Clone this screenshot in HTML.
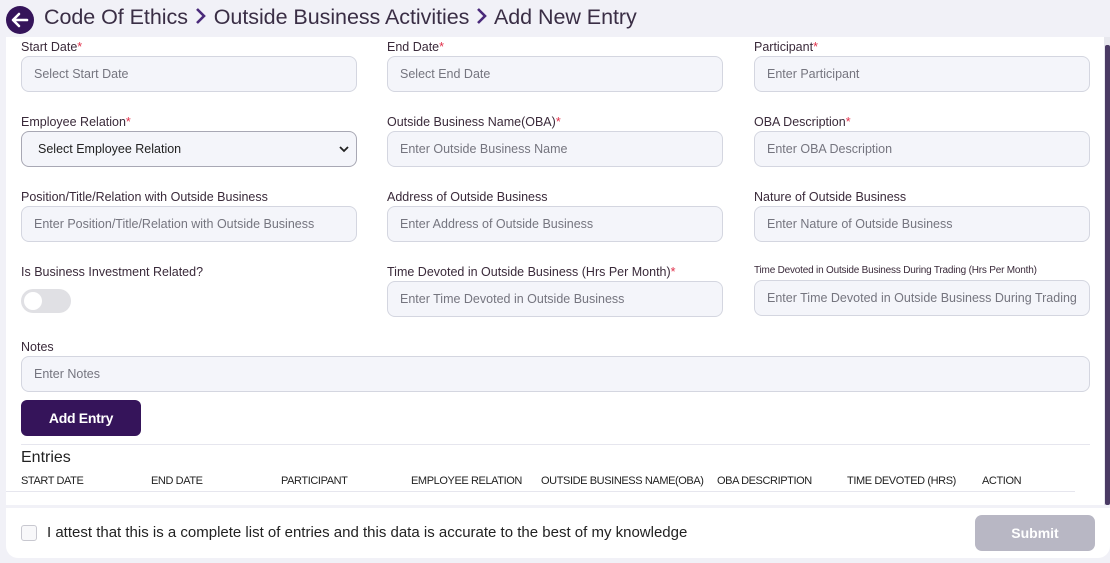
<!DOCTYPE html>
<html><head><style>
*{box-sizing:border-box;margin:0;padding:0}
body{width:1110px;height:563px;background:#f1f1f7;font-family:"Liberation Sans",sans-serif;position:relative;overflow:hidden;color:#2b2233}
.a{position:absolute}
.lbl{position:absolute;font-size:12.5px;color:#3a2a3a;white-space:nowrap}
.lbl b{color:#e0304a;font-weight:normal}
.in{position:absolute;height:36px;width:336px;background:#f4f5fa;border:1px solid #d4d6e0;border-radius:8px;font-size:12.5px;color:#75757f;padding:0 12px;line-height:34px;white-space:nowrap;overflow:hidden}
.th{position:absolute;top:475px;font-size:11px;color:#222;white-space:nowrap;letter-spacing:-0.4px}
</style></head><body>
<div class="a" style="left:6px;top:6px;width:28px;height:28px;border-radius:50%;background:#35145a">
<svg width="28" height="28" viewBox="0 0 28 28"><path d="M21 14H8M13 8l-6 6 6 6" stroke="#fff" stroke-width="2.6" fill="none" stroke-linecap="round" stroke-linejoin="round"/></svg></div>
<div class="a" style="left:44px;top:5px;font-size:21.5px;color:#3a2e45;white-space:nowrap;letter-spacing:-0.05px">Code Of Ethics <svg width="14" height="18" viewBox="0 0 14 18" style="vertical-align:-1px"><path d="M3 2l7 7-7 7" stroke="#4a2a7a" stroke-width="2.6" fill="none"/></svg> Outside Business Activities <svg width="14" height="18" viewBox="0 0 14 18" style="vertical-align:-1px"><path d="M3 2l7 7-7 7" stroke="#4a2a7a" stroke-width="2.6" fill="none"/></svg> Add New Entry</div>
<div class="a" style="left:6px;top:37px;width:1098px;height:468px;background:#fff"></div>
<div class="a" style="left:1104px;top:37px;width:6px;height:468px;background:#e8e8ee"></div>
<div class="a" style="left:1105px;top:45px;width:5px;height:460px;background:#4a3a64;border-radius:2px"></div>

<div class="lbl" style="left:21px;top:40px">Start Date<b>*</b></div>
<div class="lbl" style="left:387px;top:40px">End Date<b>*</b></div>
<div class="lbl" style="left:754px;top:40px">Participant<b>*</b></div>
<div class="in" style="left:21px;top:56px">Select Start Date</div>
<div class="in" style="left:387px;top:56px">Select End Date</div>
<div class="in" style="left:754px;top:56px">Enter Participant</div>

<div class="lbl" style="left:21px;top:115px">Employee Relation<b>*</b></div>
<div class="lbl" style="left:387px;top:115px">Outside Business Name(OBA)<b>*</b></div>
<div class="lbl" style="left:754px;top:115px">OBA Description<b>*</b></div>
<div class="in" style="left:21px;top:131px;color:#222;background:#f4f5fa;border-color:#a8a8b4;padding-left:16px">Select Employee Relation<svg class="a" style="right:6px;top:12px" width="12" height="10" viewBox="0 0 12 10"><path d="M2 3l4 4 4-4" stroke="#222" stroke-width="1.8" fill="none"/></svg></div>
<div class="in" style="left:387px;top:131px">Enter Outside Business Name</div>
<div class="in" style="left:754px;top:131px">Enter OBA Description</div>

<div class="lbl" style="left:21px;top:190px">Position/Title/Relation with Outside Business</div>
<div class="lbl" style="left:387px;top:190px">Address of Outside Business</div>
<div class="lbl" style="left:754px;top:190px">Nature of Outside Business</div>
<div class="in" style="left:21px;top:206px">Enter Position/Title/Relation with Outside Business</div>
<div class="in" style="left:387px;top:206px">Enter Address of Outside Business</div>
<div class="in" style="left:754px;top:206px">Enter Nature of Outside Business</div>

<div class="lbl" style="left:21px;top:265px">Is Business Investment Related?</div>
<div class="lbl" style="left:387px;top:265px">Time Devoted in Outside Business (Hrs Per Month)<b>*</b></div>
<div class="lbl" style="left:754px;top:265px;font-size:10px;letter-spacing:-0.2px">Time Devoted in Outside Business During Trading (Hrs Per Month)</div>
<div class="a" style="left:21px;top:289px;width:50px;height:24px;border-radius:12px;background:#e0e0e4"><div class="a" style="left:3px;top:3px;width:18px;height:18px;border-radius:50%;background:#fff"></div></div>
<div class="in" style="left:387px;top:281px">Enter Time Devoted in Outside Business</div>
<div class="in" style="left:754px;top:280px">Enter Time Devoted in Outside Business During Trading</div>

<div class="lbl" style="left:21px;top:340px">Notes</div>
<div class="in" style="left:21px;top:356px;width:1069px">Enter Notes</div>

<div class="a" style="left:21px;top:400px;width:120px;height:36px;background:#35145a;border-radius:6px;color:#fff;font-weight:bold;font-size:14px;text-align:center;line-height:36px;letter-spacing:-0.3px">Add Entry</div>
<div class="a" style="left:21px;top:444px;width:1069px;height:1px;background:#e6e6ee"></div>
<div class="a" style="left:21px;top:449px;font-size:16px;color:#222">Entries</div>
<div class="th" style="left:21px">START DATE</div>
<div class="th" style="left:151px">END DATE</div>
<div class="th" style="left:281px">PARTICIPANT</div>
<div class="th" style="left:411px">EMPLOYEE RELATION</div>
<div class="th" style="left:541px">OUTSIDE BUSINESS NAME(OBA)</div>
<div class="th" style="left:717px">OBA DESCRIPTION</div>
<div class="th" style="left:847px">TIME DEVOTED (HRS)</div>
<div class="th" style="left:982px">ACTION</div>
<div class="a" style="left:6px;top:491px;width:1069px;height:1px;background:#e6e6ee"></div>

<div class="a" style="left:6px;top:508px;width:1104px;height:50px;background:#fff;border-radius:0 0 12px 12px"></div>
<div class="a" style="left:21px;top:525px;width:16px;height:16px;border:1px solid #c8c8d0;border-radius:3px;background:#f8f8fa"></div>
<div class="a" style="left:47px;top:524px;font-size:15px;color:#222;white-space:nowrap;letter-spacing:0px">I attest that this is a complete list of entries and this data is accurate to the best of my knowledge</div>
<div class="a" style="left:975px;top:515px;width:120px;height:36px;background:#b8b7c4;border-radius:7px;color:#fff;font-weight:bold;font-size:14px;text-align:center;line-height:36px">Submit</div>
</body></html>
